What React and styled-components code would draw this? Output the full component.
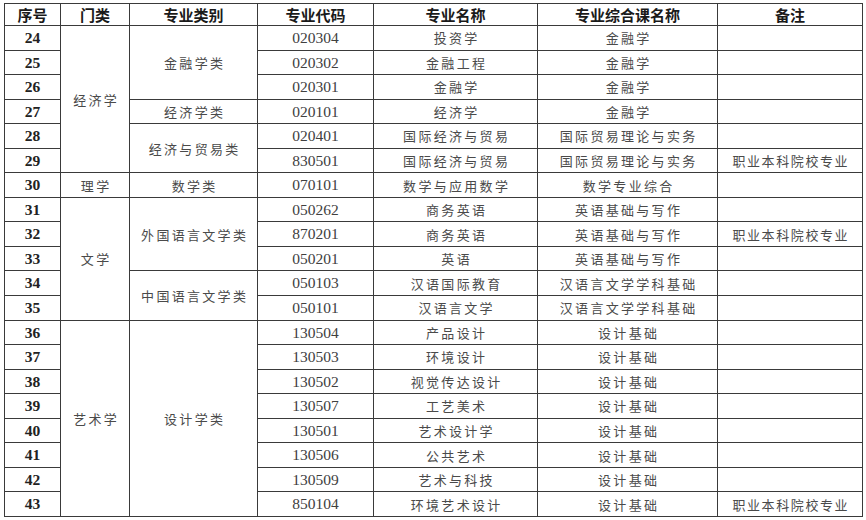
import React from "react";
import styled, { createGlobalStyle } from "styled-components";

const Global = createGlobalStyle`
  html, body { margin: 0; padding: 0; background: #fff; }
  body { width: 866px; height: 520px; overflow: hidden; }
`;

const Page = styled.div`
  padding: 3px 0 0 4px;
  width: 866px;
  box-sizing: border-box;
`;

const Table = styled.table`
  border-collapse: collapse;
  table-layout: fixed;
  width: 858px;
  border: 1.5px solid #3a3a3a;
`;

const HeadRow = styled.tr`
  height: 22px;
`;

const Row = styled.tr`
  height: 24.55px;
`;

const Cell = styled.td`
  border: 1px solid #3a3a3a;
  padding: 0;
  text-align: center;
  vertical-align: middle;
  white-space: nowrap;
  overflow: hidden;
  line-height: 1;
`;

const HeadCell = styled(Cell).attrs({ as: "th" })`
  font-family: "Noto Sans CJK SC", "Noto Sans", sans-serif;
  font-weight: 700;
  font-size: 15px;
  color: #1a1a1a;
`;

const NumCell = styled(Cell)`
  font-family: "Liberation Serif", "DejaVu Serif", serif;
  font-size: ${(p) => (p.$seq ? "15.5px" : "15.5px")};
  font-weight: ${(p) => (p.$seq ? 700 : 400)};
  color: ${(p) => (p.$seq ? "#222" : "#404040")};
`;

const TextCell = styled(Cell)`
  font-family: "Noto Sans CJK SC", "Noto Sans", sans-serif;
  font-weight: 400;
  font-size: 13px;
  color: #4a4a4a;
  letter-spacing: ${(p) => p.$ls || "2.3px"};
  padding-left: ${(p) => p.$ls || "2.3px"};
`;

const cols = [56, 69, 128, 116, 164, 180, 145];

const rows = [
  [24, "020304", "投资学", "金融学", ""],
  [25, "020302", "金融工程", "金融学", ""],
  [26, "020301", "金融学", "金融学", ""],
  [27, "020101", "经济学", "金融学", ""],
  [28, "020401", "国际经济与贸易", "国际贸易理论与实务", ""],
  [29, "830501", "国际经济与贸易", "国际贸易理论与实务", "职业本科院校专业"],
  [30, "070101", "数学与应用数学", "数学专业综合", ""],
  [31, "050262", "商务英语", "英语基础与写作", ""],
  [32, "870201", "商务英语", "英语基础与写作", "职业本科院校专业"],
  [33, "050201", "英语", "英语基础与写作", ""],
  [34, "050103", "汉语国际教育", "汉语言文学学科基础", ""],
  [35, "050101", "汉语言文学", "汉语言文学学科基础", ""],
  [36, "130504", "产品设计", "设计基础", ""],
  [37, "130503", "环境设计", "设计基础", ""],
  [38, "130502", "视觉传达设计", "设计基础", ""],
  [39, "130507", "工艺美术", "设计基础", ""],
  [40, "130501", "艺术设计学", "设计基础", ""],
  [41, "130506", "公共艺术", "设计基础", ""],
  [42, "130509", "艺术与科技", "设计基础", ""],
  [43, "850104", "环境艺术设计", "设计基础", "职业本科院校专业"],
];

const menlei = { 24: ["经济学", 6], 30: ["理学", 1], 31: ["文学", 5], 36: ["艺术学", 8] };
const leibie = {
  24: ["金融学类", 3],
  27: ["经济学类", 1],
  28: ["经济与贸易类", 2],
  30: ["数学类", 1],
  31: ["外国语言文学类", 3],
  34: ["中国语言文学类", 2],
  36: ["设计学类", 8],
};

export default function App() {
  return (
    <Page>
      <Global />
      <Table>
        <colgroup>
          {cols.map((w, i) => (
            <col key={i} style={{ width: w }} />
          ))}
        </colgroup>
        <thead>
          <HeadRow>
            <HeadCell>序号</HeadCell>
            <HeadCell>门类</HeadCell>
            <HeadCell>专业类别</HeadCell>
            <HeadCell>专业代码</HeadCell>
            <HeadCell>专业名称</HeadCell>
            <HeadCell>专业综合课名称</HeadCell>
            <HeadCell>备注</HeadCell>
          </HeadRow>
        </thead>
        <tbody>
          {rows.map(([n, code, name, course, note]) => (
            <Row key={n}>
              <NumCell $seq>{n}</NumCell>
              {menlei[n] && <TextCell rowSpan={menlei[n][1]}>{menlei[n][0]}</TextCell>}
              {leibie[n] && <TextCell rowSpan={leibie[n][1]}>{leibie[n][0]}</TextCell>}
              <NumCell>{code}</NumCell>
              <TextCell>{name}</TextCell>
              <TextCell>{course}</TextCell>
              <TextCell $ls="1.6px">{note}</TextCell>
            </Row>
          ))}
        </tbody>
      </Table>
    </Page>
  );
}
